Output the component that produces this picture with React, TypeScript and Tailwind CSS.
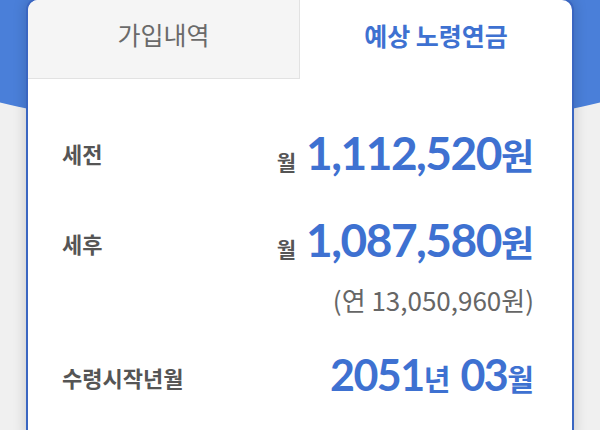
import React from 'react'

const font = { fontFamily: '"Noto Sans CJK KR", "Noto Sans", sans-serif' }
const digits = { fontFamily: 'Lato, "Noto Sans CJK KR", sans-serif' }

type AmountRowProps = {
    label: string
    amount: string
    labelPad: string
}

const AmountRow = ({ label, amount, labelPad }: AmountRowProps) => {
    return (
        <div className="flex h-[80px] items-center justify-between">
            <span className={`${labelPad} text-[22px] font-semibold text-[#555555]`}>{label}</span>
            <div className="flex items-baseline">
                <span className="mr-[10px] text-[21px] font-semibold text-[#555555]">월</span>
                <span className="text-[46px] font-bold tracking-[-1.5px] text-[#3e71d1]" style={digits}>
                    {amount}
                </span>
                <span className="text-[36px] font-bold text-[#3e71d1]">원</span>
            </div>
        </div>
    )
}

export default function App() {
    return (
        <div className="relative h-[430px] w-[600px] overflow-hidden bg-[#f0f0f0]" style={font}>
            {/* blue header curve behind the card */}
            <div className="absolute left-[-300px] top-[-364px] h-[500px] w-[1200px] rounded-[50%] bg-[#4a7fd9]" />

            <div className="relative mx-[26px] -mt-[2px] h-[440px] rounded-t-[12px] border-2 border-[#3a66c1] bg-white shadow-[0_0_14px_rgba(0,0,0,0.18)]">
                <div className="flex h-[79px]">
                    <div className="flex w-[272px] items-center justify-center rounded-tl-[10px] border-b border-r border-[#e2e2e2] bg-[#f5f5f5] pb-[8px]">
                        <span className="text-[25px] text-[#6a6a6a]">가입내역</span>
                    </div>
                    <div className="flex flex-1 items-center justify-center pb-[8px]">
                        <span className="text-[25px] font-bold text-[#3e71d1]">예상 노령연금</span>
                    </div>
                </div>

                <div className="pl-[34px] pr-[38px] pt-[33px]">
                    <AmountRow label="세전" amount="1,112,520" labelPad="pt-[2px]" />
                    <div className="mt-[7px]">
                        <AmountRow label="세후" amount="1,087,580" labelPad="pt-[8px]" />
                    </div>
                    <div className="mt-[5px] flex h-[30px] items-center justify-end">
                        <span className="text-[26px] text-[#666666]">(연 13,050,960원)</span>
                    </div>
                    <div className="mt-[21px] flex h-[80px] items-center justify-between">
                        <span className="pt-[4px] text-[22px] font-semibold text-[#555555]">수령시작년월</span>
                        <div className="flex items-baseline font-bold text-[#3e71d1]">
                            <span className="text-[43px] tracking-[-1.5px]" style={digits}>2051</span>
                            <span className="mr-[10px] text-[29px]">년</span>
                            <span className="text-[43px] tracking-[-1.5px]" style={digits}>03</span>
                            <span className="text-[29px]">월</span>
                        </div>
                    </div>
                </div>
            </div>
        </div>
    )
}
